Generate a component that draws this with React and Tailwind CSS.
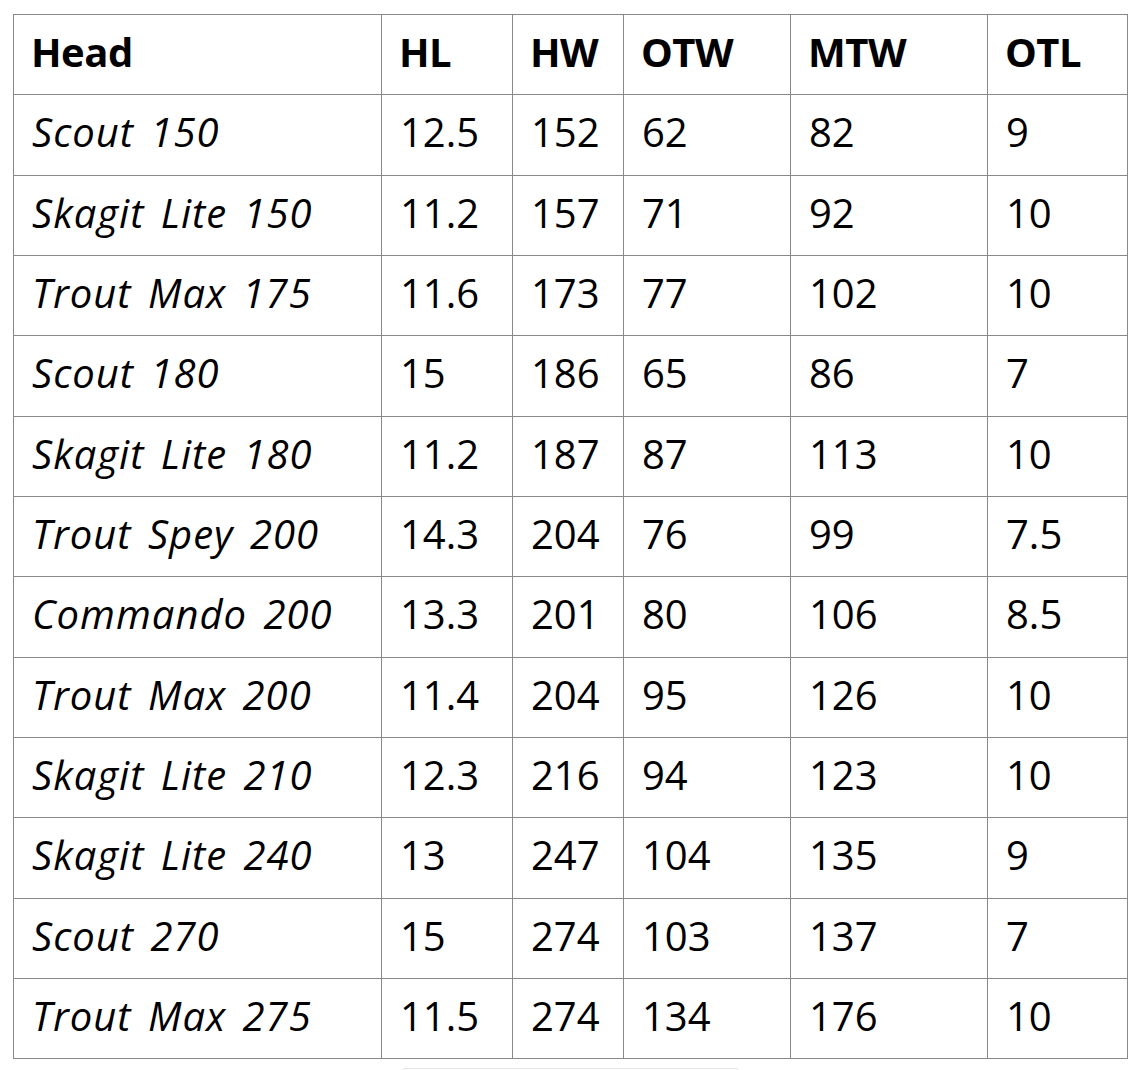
import React from "react";

const rows = [
  ["Scout 150", "12.5", "152", "62", "82", "9"],
  ["Skagit Lite 150", "11.2", "157", "71", "92", "10"],
  ["Trout Max 175", "11.6", "173", "77", "102", "10"],
  ["Scout 180", "15", "186", "65", "86", "7"],
  ["Skagit Lite 180", "11.2", "187", "87", "113", "10"],
  ["Trout Spey 200", "14.3", "204", "76", "99", "7.5"],
  ["Commando 200", "13.3", "201", "80", "106", "8.5"],
  ["Trout Max 200", "11.4", "204", "95", "126", "10"],
  ["Skagit Lite 210", "12.3", "216", "94", "123", "10"],
  ["Skagit Lite 240", "13", "247", "104", "135", "9"],
  ["Scout 270", "15", "274", "103", "137", "7"],
  ["Trout Max 275", "11.5", "274", "134", "176", "10"],
];

const headers = ["Head", "HL", "HW", "OTW", "MTW", "OTL"];

export default function App() {
  return (
    <div className="min-h-[1070px] bg-white pl-[13px] pt-[14px] text-black" style={{ fontFamily: "'Open Sans', 'Noto Sans', sans-serif" }}>
      <table className="table-fixed border-collapse w-[1114px] text-[40px]">
        <colgroup>
          <col className="w-[368px]" />
          <col className="w-[131px]" />
          <col className="w-[111px]" />
          <col className="w-[167px]" />
          <col className="w-[197px]" />
          <col className="w-[140px]" />
        </colgroup>
        <thead>
          <tr className="h-[80px]">
            {headers.map((h) => (
              <th key={h} className="border border-[#888888] pl-[17px] pr-0 pb-[6px] text-left font-bold leading-none align-middle tracking-[-0.5px]">
                {h}
              </th>
            ))}
          </tr>
        </thead>
        <tbody>
          {rows.map((r, i) => (
            <tr key={i} className={i % 3 === 0 ? "h-[81px]" : "h-[80px]"}>
              {r.map((c, j) => (
                <td
                  key={j}
                  className={
                    j === 0
                      ? "border border-[#888888] pl-[18px] pr-0 pb-[6px] leading-none align-middle whitespace-nowrap italic tracking-[1px] [word-spacing:5px]"
                      : "border border-[#888888] pl-[18px] pr-0 pb-[6px] leading-none align-middle whitespace-nowrap"
                  }
                >
                  {c}
                </td>
              ))}
            </tr>
          ))}
        </tbody>
      </table>
      <div className="ml-[387px] mt-[9px] h-[20px] w-[341px] rounded-[6px] border border-[#e3e3e3]" />
    </div>
  );
}
